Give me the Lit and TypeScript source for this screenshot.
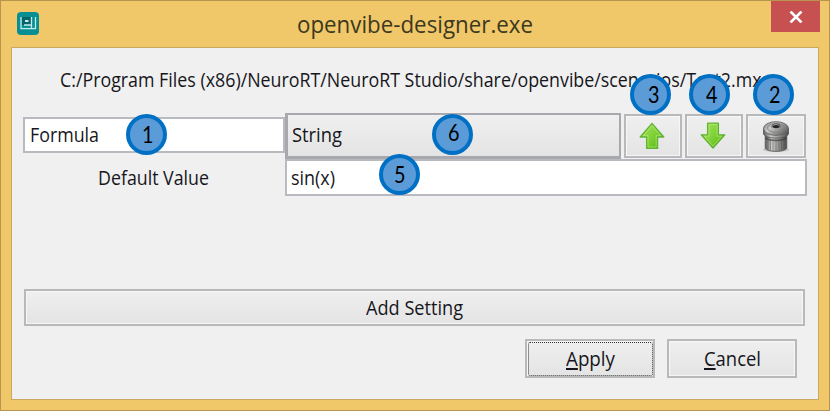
import { LitElement, html, css, svg } from "lit";
import { customElement, property, query } from "lit/decorators.js";

/** A single line of text condensed or widened to a set width. */
@customElement("fit-text")
class FitText extends LitElement {
  @property({ type: Number }) width = 100;
  @query(".line") line!: HTMLElement;
  static styles = css`
    :host { display: inline-block; white-space: nowrap; flex: none; }
    .line { display: inline-block; transform-origin: 0 50%; }
  `;
  render() {
    return html`<span class="line"><slot></slot></span>`;
  }
  firstUpdated() {
    this.style.width = `${this.width}px`;
    const natural = this.line.getBoundingClientRect().width;
    if (natural) this.line.style.transform = `scaleX(${this.width / natural})`;
  }
}

@customElement("num-badge")
class NumBadge extends LitElement {
  static styles = css`
    :host {
      position: absolute;
      box-sizing: border-box;
      width: 41px;
      height: 41px;
      border: 4px solid #0070c4;
      border-radius: 50%;
      background: #5b9bd7;
      color: #000;
      font: 22.500px/33px Lato, sans-serif;
      text-align: center;
      z-index: 2;
    }
  `;
  render() {
    return html`<fit-text width="11.5"><slot></slot></fit-text>`;
  }
}

const arrow = (id: string, down: boolean) => html`
  <svg class="icon" width="28" height="28" viewBox="0 0 28 28">
    <defs>
      <linearGradient id=${id} x1="0" y1="0" x2="1" y2="1">
        <stop offset="0" stop-color="#a6e262"></stop>
        <stop offset=".5" stop-color="#80d238"></stop>
        <stop offset="1" stop-color="#52b010"></stop>
      </linearGradient>
    </defs>
    ${down
      ? svg`<path d="M8.6 1.2h10.8v11.6h6.4L14 26 2.200 12.800h6.400z" fill="url(#${id})" stroke="#62b236" stroke-width="1.300" stroke-linejoin="round"/>
          <path d="M10 2.600h8v11.600h4.600L14 24 5.400 14.200H10z" fill="none" stroke="#c0f082" stroke-opacity=".55"/>`
      : svg`<path d="M14 1.400 25.800 15h-6.200v11.400H8.600V15H2.200z" fill="url(#${id})" stroke="#62b236" stroke-width="1.300" stroke-linejoin="round"/>
          <path d="M14 3.600 22.800 13.600h-4.600V25H10V13.600H5.400z" fill="none" stroke="#c0f082" stroke-opacity=".55"/>`}
  </svg>`;

const trash = html`
  <svg class="icon" width="28" height="33" viewBox="0 0 28 33">
    <defs>
      <linearGradient id="can" x1="0" x2="1" y1="0" y2="0">
        <stop offset="0" stop-color="#5a5a5a"></stop>
        <stop offset=".3" stop-color="#cacac8"></stop>
        <stop offset=".6" stop-color="#989896"></stop>
        <stop offset="1" stop-color="#4a4a4a"></stop>
      </linearGradient>
      <linearGradient id="lid" x1="0" x2="1" y1="0" y2=".5">
        <stop offset="0" stop-color="#808080"></stop>
        <stop offset=".4" stop-color="#c8c8c6"></stop>
        <stop offset="1" stop-color="#6a6a6a"></stop>
      </linearGradient>
    </defs>
    <ellipse cx="14" cy="29.500" rx="13" ry="2.500" fill="#000" opacity=".15"></ellipse>
    <path d="M3.200 14v14c1.600 4.500 20 4.500 21.600 0V14z" fill="url(#can)" stroke="#555" stroke-width=".8"></path>
    <path d="M6 18v11M8.500 19v11M11 19v12M14 19v12M17 19v12M19.500 19v11M22 18v11" stroke="#4c4c4c" stroke-width=".8" opacity=".5"></path>
    <path d="M3.500 17.500c3 4 18 4 21 0" fill="none" stroke="#333" stroke-width="1.500" opacity=".6"></path>
    <path d="M1.500 8.500v5.500c2 5.500 23 5.500 25 0V8.500z" fill="url(#can)" stroke="#555" stroke-width=".8"></path>
    <ellipse cx="14" cy="8.500" rx="12.500" ry="6.800" fill="url(#lid)" stroke="#606060" stroke-width=".9"></ellipse>
    <ellipse cx="14" cy="8" rx="8.500" ry="4.400" fill="none" stroke="#7d7d7d" stroke-width=".8"></ellipse>
    <path d="M9.800 7.500c0-5 8.400-5 8.400 0" fill="none" stroke="#5a5a5a" stroke-width="1.200"></path>
    <ellipse cx="14" cy="6.600" rx="3.400" ry="1.600" fill="#242424"></ellipse>
  </svg>`;

@customElement("app-root")
class AppRoot extends LitElement {
  static styles = css`
    * { box-sizing: border-box; }
    :host { display: block; }
    .window {
      position: relative;
      width: 830px;
      height: 411px;
      display: flex;
      flex-direction: column;
      background: #f0c869;
      border: 1.500px solid #b7954f;
      padding: 0 10px 10px;
      font: 20px/26px "Open Sans", "Noto Sans", sans-serif;
      color: #16161c;
      overflow: hidden;
    }
    .bar {
      height: 46px;
      flex: none;
      display: grid;
      grid-template-columns: 48px 1fr 48px;
      align-items: start;
    }
    .logo { display: block; margin: 11px 0 0 6px; }
    .title {
      margin-top: 7px;
      text-align: center;
      font-size: 24px;
      line-height: 32px;
      color: #3d3820;
    }
    .close {
      width: 49px;
      height: 31px;
      background: #c75050;
      display: flex;
      align-items: center;
      justify-content: center;
    }
    .client {
      flex: 1;
      display: flex;
      flex-direction: column;
      background: #f0f0f0;
      border: 1px solid #c9a95f;
      padding: 0 11px;
    }
    .path { height: 65px; padding: 19px 0 0 37px; }
    .row { display: flex; align-items: center; flex: none; }
    .settings { height: 46px; }
    .box {
      display: flex;
      align-items: center;
      background: #fff;
      border: 2px solid #b9bac0;
      padding-left: 5px;
    }
    .name { width: 262px; height: 36px; margin-top: -2px; }
    .btn {
      display: flex;
      align-items: center;
      justify-content: center;
      border: 2px solid #b9b9bb;
      box-shadow: inset 0 0 0 1px #f6f6f6;
      background: linear-gradient(#efefef, #e4e4e4);
    }
    .type {
      width: 336px;
      height: 46px;
      justify-content: flex-start;
      padding: 0 0 2px 4px;
      border: 3px solid #a8a9ae;
      border-width: 2px 2px 3px 3px;
      box-shadow: none;
    }
    .tool { width: 58px; height: 44px; margin-left: 3px; padding-right: 2px; }
    .tool.bin { width: 60px; padding-right: 1px; }
    .icon { display: block; }
    .label { width: 262px; padding-left: 75px; }
    .value { width: 522px; height: 37px; padding-left: 4px; }
    .add { width: 781px; height: 37px; margin: 93px 0 0 1px; flex: none; }
    .actions { gap: 12px; margin: 13px 10px 0 0; justify-content: flex-end; }
    .action { width: 130px; height: 39px; }
    .focus {
      width: 125px;
      height: 34px;
      border: 1.500px dotted #333;
      border-radius: 2px;
      display: flex;
      align-items: center;
      justify-content: center;
    }
    .key { text-decoration: underline; text-decoration-thickness: 2px; text-underline-offset: 2px; }
    .b1 { left: 125px; top: 113px; padding-left: 2px; }
    .b6 { left: 431px; top: 113px; line-height: 30px; padding-left: 2px; }
    .b5 { left: 378px; top: 153px; padding-left: 1px; }
    .b3 { left: 629px; top: 73px; padding-left: 6px; }
    .b4 { left: 688px; top: 73px; padding-left: 5px; }
    .b2 { left: 752px; top: 73px; padding-left: 3px; }
  `;

  render() {
    return html`
      <div class="window">
        <div class="bar">
          <svg class="logo" width="22" height="23" viewBox="0 0 22 23">
            <rect width="22" height="23" rx="4" fill="#078f94"></rect>
            <rect x="5" y="5" width="9" height="8" fill="#04666c"></rect>
            <path d="M4 5V16.700H18.500V5M14.500 5V16.700M7 13H14" fill="none" stroke="#c4ecea" stroke-width="1.300"></path>
            <path d="M8 9H11.500" stroke="#c4ecea" stroke-width="2"></path>
          </svg>
          <div class="title"><fit-text width="236">openvibe-designer.exe</fit-text></div>
          <div class="close">
            <svg width="14" height="12" viewBox="0 0 14 12">
              <path d="M1.500 .5 12.500 11.500M12.500 .5 1.500 11.500" stroke="#fff" stroke-width="2.600"></path>
            </svg>
          </div>
        </div>
        <div class="client">
          <div class="path">
            <fit-text width="710">C:/Program Files (x86)/NeuroRT/NeuroRT Studio/share/openvibe/scenarios/Test2.mxs</fit-text>
          </div>
          <div class="row settings">
            <div class="box name"><fit-text width="69">Formula</fit-text></div>
            <div class="btn type"><fit-text width="50">String</fit-text></div>
            <div class="btn tool">${arrow("up", false)}</div>
            <div class="btn tool">${arrow("down", true)}</div>
            <div class="btn tool bin">${trash}</div>
          </div>
          <div class="row">
            <div class="label"><fit-text width="111">Default Value</fit-text></div>
            <div class="box value"><fit-text width="44">sin(x)</fit-text></div>
          </div>
          <div class="btn add"><fit-text width="97">Add Setting</fit-text></div>
          <div class="row actions">
            <div class="btn action"><div class="focus"><fit-text width="49"><span class="key">A</span>pply</fit-text></div></div>
            <div class="btn action"><fit-text width="57"><span class="key">C</span>ancel</fit-text></div>
          </div>
        </div>
        <num-badge class="b1">1</num-badge>
        <num-badge class="b6">6</num-badge>
        <num-badge class="b5">5</num-badge>
        <num-badge class="b3">3</num-badge>
        <num-badge class="b4">4</num-badge>
        <num-badge class="b2">2</num-badge>
      </div>
    `;
  }
}
